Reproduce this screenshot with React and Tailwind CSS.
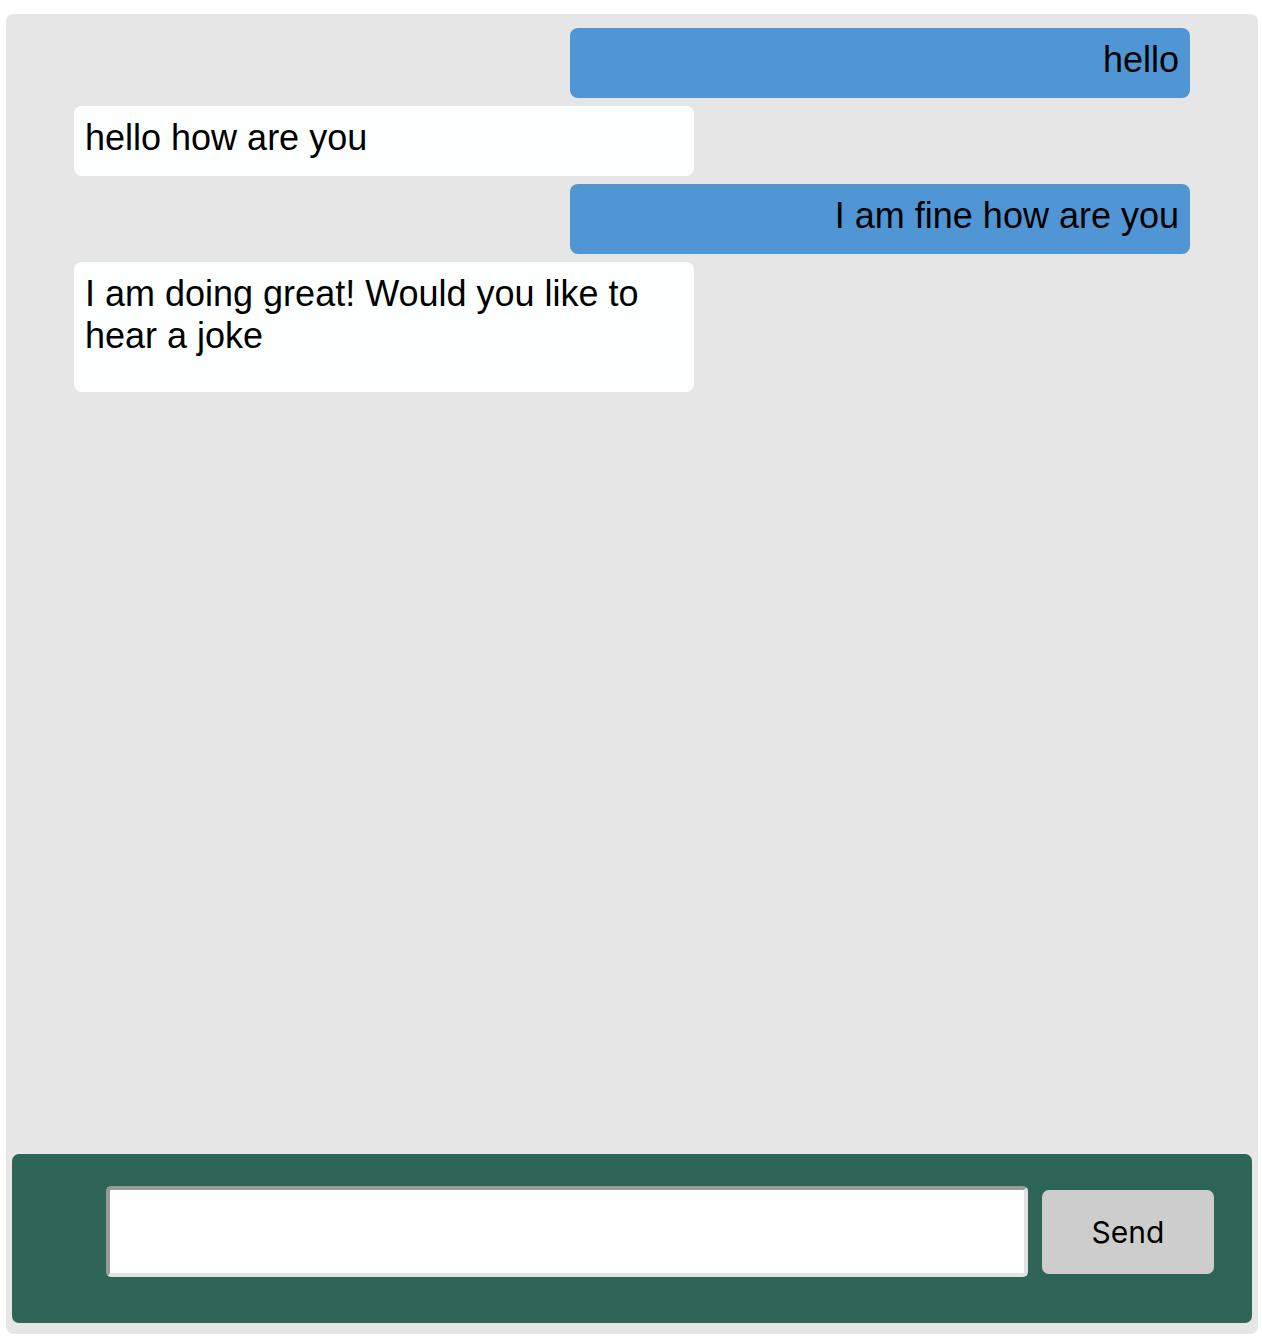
import React, { useState } from "react";

const initialMessages = [
  { id: 1, fromMe: true, text: "hello", pad: "pb-[17px]" },
  { id: 2, fromMe: false, text: "hello how are you", pad: "pb-[17px]" },
  { id: 3, fromMe: true, text: "I am fine how are you", pad: "pb-[17px]" },
  {
    id: 4,
    fromMe: false,
    text: "I am doing great! Would you like to hear a joke",
    pad: "pb-[35px]",
  },
];

const ChatWindow = () => {
  const [messages] = useState(initialMessages);
  const [draft, setDraft] = useState("");

  return (
    <div className="ml-[6px] mr-[4px] mt-[14px] flex h-[1320px] flex-col rounded-[8px] bg-[#e6e6e6]">
      {/* Danh sách tin nhắn */}
      <div className="flex flex-1 flex-col gap-[8px] px-[68px] pt-[14px]">
        {messages.map((msg) => (
          <div
            key={msg.id}
            className={
              msg.fromMe
                ? `w-[620px] self-end rounded-[8px] bg-[#5096d4] px-[11px] pt-[11px] text-right ${msg.pad}`
                : `w-[620px] self-start rounded-[8px] bg-[#fdfffe] px-[11px] pt-[11px] text-left ${msg.pad}`
            }
          >
            <p className="font-['Liberation_Sans',Arial,sans-serif] text-[36px] leading-[42px] text-black">
              {msg.text}
            </p>
          </div>
        ))}
      </div>

      {/* Ô nhập */}
      <div className="mx-[6px] mb-[11px] flex h-[169px] items-start rounded-[7px] bg-[#2e6557] pl-[94px] pt-[32px]">
        <input
          value={draft}
          onChange={(e) => setDraft(e.target.value)}
          className="h-[91px] w-[922px] rounded-[5px] border-[4px] border-t-[#999999] border-l-[#999999] border-b-[#e2e2e2] border-r-[#e2e2e2] bg-white px-3 text-[30px] outline-none"
        />
        <button className="ml-[14px] mt-[4px] h-[84px] w-[172px] rounded-[7px] bg-[#cdcdcd] font-['Inter',sans-serif] text-[30px] text-black">
          Send
        </button>
      </div>
    </div>
  );
};

export default function App() {
  return (
    <div className="h-[1338px] bg-white">
      <ChatWindow />
    </div>
  );
}
